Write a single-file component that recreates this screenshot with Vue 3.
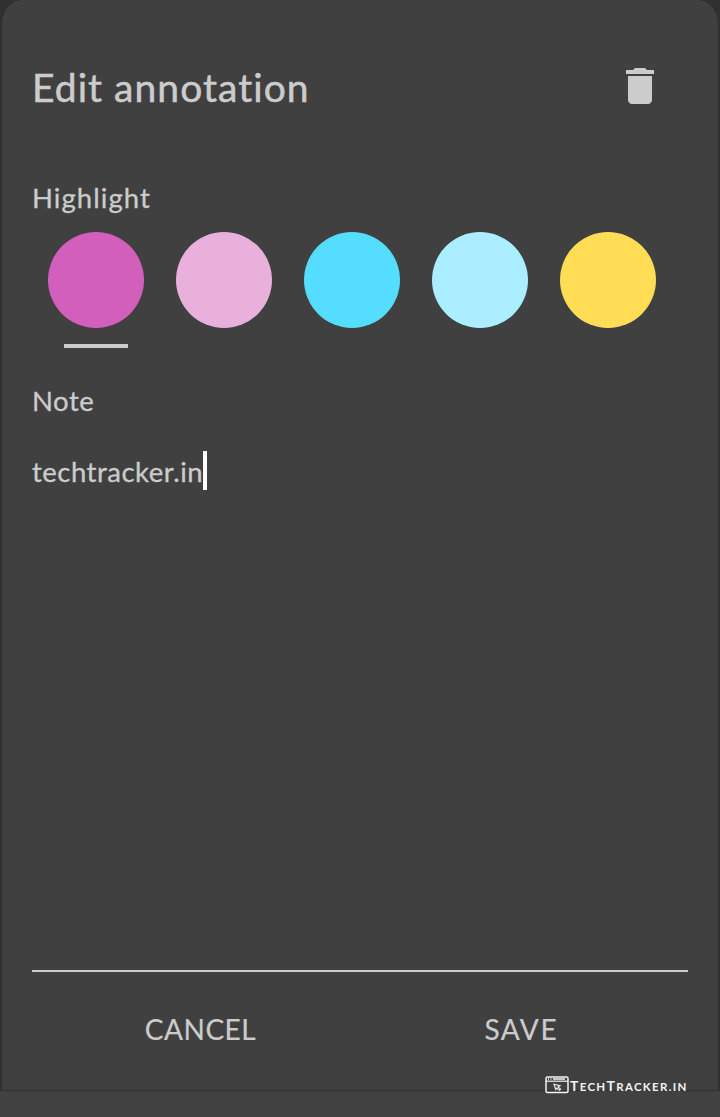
<script setup>
import { ref } from 'vue'

const colors = ['#d35fbc', '#e9b0dc', '#55ddff', '#aaeeff', '#ffdd55']
const selected = ref(0)
</script>

<template>
  <main class="screen">
    <section class="sheet">
      <header class="header">
        <h1><span class="title">Edit annotation</span></h1>
        <button class="delete" aria-label="Delete">
          <svg viewBox="0 0 24 24" width="48" height="48">
            <path fill="currentColor" d="M6 19c0 1.1.9 2 2 2h8c1.1 0 2-.9 2-2V7H6v12zM19 4h-3.5l-1-1h-5l-1 1H5v2h14V4z" />
          </svg>
        </button>
      </header>
      <h2 class="label highlight">Highlight</h2>
      <div class="swatches">
        <button
          v-for="(color, i) in colors"
          :key="color"
          class="swatch"
          :class="{ active: selected === i }"
          @click="selected = i"
        >
          <span class="dot" :style="{ background: color }"></span>
          <span class="bar"></span>
        </button>
      </div>
      <h2 class="label note">Note</h2>
      <div class="field"><span class="value">techtracker.in</span><span class="caret"></span></div>
      <footer class="actions">
        <button class="action"><span class="cancel">CANCEL</span></button>
        <button class="action"><span class="save">SAVE</span></button>
      </footer>
    </section>
    <div class="watermark">
      <svg width="24" height="18" viewBox="0 0 24 18" fill="none" stroke="#f2f2f2">
        <rect x="1" y="1" width="22" height="15.6" rx="1.5" stroke-width="1.5" />
        <path d="M1 5.2h22" stroke-width="1.2" />
        <path d="M3 3h1M5.500 3h1M8 3h12" stroke-width="1.3" />
        <path d="M9 8.200l6 1.600-2 1.200 2.600 2.200-1.200 1-2.600-2.200-1 1.700z" stroke-width="1.1" />
      </svg>
      <span class="brand">T<small>ECH</small>T<small>RACKER.IN</small></span>
    </div>
  </main>
</template>

<style>
body {
  background: #414141;
}
</style>

<style scoped>
.screen {
  position: relative;
  box-sizing: border-box;
  width: 720px;
  height: 1117px;
  overflow: hidden;
  background: linear-gradient(#303030 0 1091px, #414141 1091px);
  color: #cccccc;
  font-family: Lato, "Liberation Sans", sans-serif;
}
.sheet {
  display: flex;
  flex-direction: column;
  box-sizing: border-box;
  width: 716px;
  height: 1090px;
  margin: 0 2px;
  padding: 0 30px;
  border-radius: 20px 20px 0 0 / 24px 24px 0 0;
  background: #404040;
}
button {
  padding: 0;
  border: 0;
  background: none;
  color: inherit;
  font: inherit;
}
h1, h2 {
  margin: 0;
  font-weight: 400;
}
.header {
  display: flex;
  justify-content: space-between;
  align-items: center;
  height: 116px;
  padding: 28px 24px 28px 0;
  box-sizing: content-box;
}
h1 {
  padding-top: 2px;
  font-size: 39px;
  line-height: 48px;
  -webkit-text-stroke: 0.5px currentColor;
}
.title {
  letter-spacing: 1.05px;
}
.delete, .delete svg {
  display: block;
}
.label {
  height: 36px;
  font-size: 27.5px;
  line-height: 36px;
  -webkit-text-stroke: 0.3px currentColor;
}
.highlight {
  margin-top: 8px;
  letter-spacing: 1.05px;
}
.swatches {
  display: flex;
  gap: 32px;
  margin-top: 16px;
  padding-left: 16px;
}
.swatch {
  width: 96px;
}
.dot {
  display: block;
  height: 96px;
  border-radius: 50%;
}
.bar {
  display: block;
  width: 64px;
  height: 4px;
  margin: 16px auto 0;
}
.active .bar {
  background: #cccccc;
}
.note {
  margin-top: 35px;
  letter-spacing: 0.5px;
}
.field {
  display: flex;
  align-items: flex-start;
  flex: 1;
  box-sizing: border-box;
  margin-top: 32px;
  border-bottom: 2px solid #cccccc;
  font-size: 27.5px;
  line-height: 41px;
  -webkit-text-stroke: 0.3px currentColor;
}
.value {
  letter-spacing: 0.5px;
}
.caret {
  width: 4px;
  height: 39px;
  background: #ffffff;
}
.actions {
  display: grid;
  grid-template-columns: 337px 303px;
  height: 118px;
}
.action {
  height: 114px;
  font-size: 28px;
  line-height: 36px;
  -webkit-text-stroke: 0.2px currentColor;
}
.cancel {
  letter-spacing: 0.5px;
}
.save {
  margin-right: -1.6px;
  letter-spacing: 1.6px;
}
.watermark {
  position: absolute;
  top: 1076px;
  left: 545px;
  display: flex;
  align-items: center;
  height: 18px;
  color: #f2f2f2;
}
.brand {
  padding: 2px 0 0 1px;
  font-size: 14px;
  font-weight: 700;
  line-height: 18px;
  letter-spacing: 1.3px;
}
.brand small {
  font-size: 11.5px;
}
</style>
